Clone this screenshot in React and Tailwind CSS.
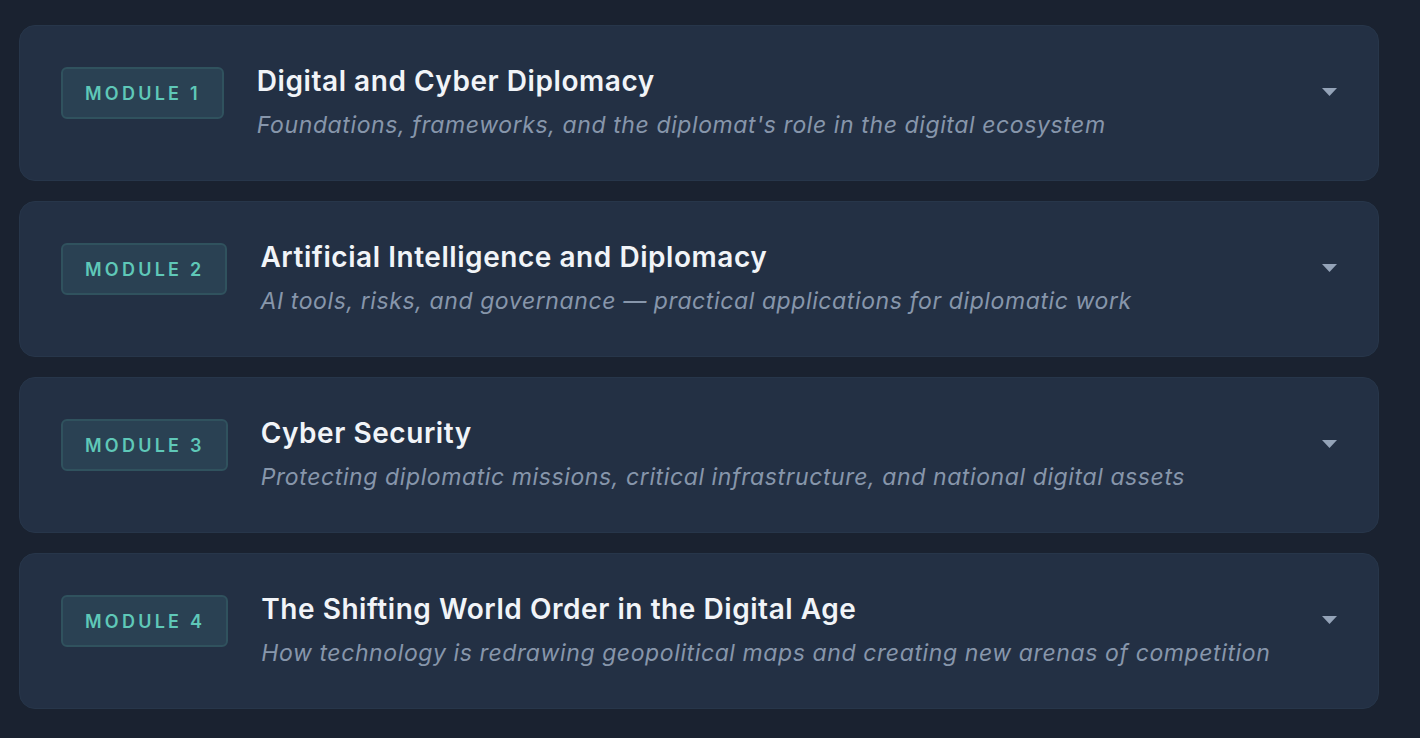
import React from "react";

const modules = [
  { n: 1, title: "Digital and Cyber Diplomacy", sub: "Foundations, frameworks, and the diplomat's role in the digital ecosystem" },
  { n: 2, title: "Artificial Intelligence and Diplomacy", sub: "AI tools, risks, and governance — practical applications for diplomatic work" },
  { n: 3, title: "Cyber Security", sub: "Protecting diplomatic missions, critical infrastructure, and national digital assets" },
  { n: 4, title: "The Shifting World Order in the Digital Age", sub: "How technology is redrawing geopolitical maps and creating new arenas of competition" },
];

export default function App() {
  return (
    <div
      className="min-h-[738px] w-full bg-[#1a2230] pl-[19px] pt-[25px]"
      style={{ fontFamily: "Inter, 'Noto Sans', sans-serif" }}
    >
      <div className="flex w-[1360px] flex-col gap-[20px]">
        {modules.map((m) => (
          <div
            key={m.n}
            className="flex h-[156px] items-start rounded-[16px] border border-[#27364a] bg-[#233044] pl-[41px] pr-[41px] pt-[41px]"
          >
            <div className="flex h-[52px] shrink-0 items-center rounded-[6px] border-2 border-[#30525e] bg-[#2a4153] pl-[22px] pr-[21px] text-[18px] font-semibold tracking-[0.18em] text-[#5fc8b8]">
              MODULE {m.n}
            </div>
            <div className="ml-[33px] flex flex-1 flex-col">
              <div className="mt-[-5px] text-[28px] font-semibold leading-[38px] tracking-[0.55px] text-[#f1f4f8]">
                {m.title}
              </div>
              <div className="mt-[10px] text-[23px] italic leading-[30px] tracking-[0.6px] text-[#8796ab]">
                {m.sub}
              </div>
            </div>
            <div className="mt-[21px] shrink-0">
              <svg width="15" height="8" viewBox="0 0 15 8">
                <path d="M0 0 H15 L7.5 8 Z" fill="#94a3b8" />
              </svg>
            </div>
          </div>
        ))}
      </div>
    </div>
  );
}
